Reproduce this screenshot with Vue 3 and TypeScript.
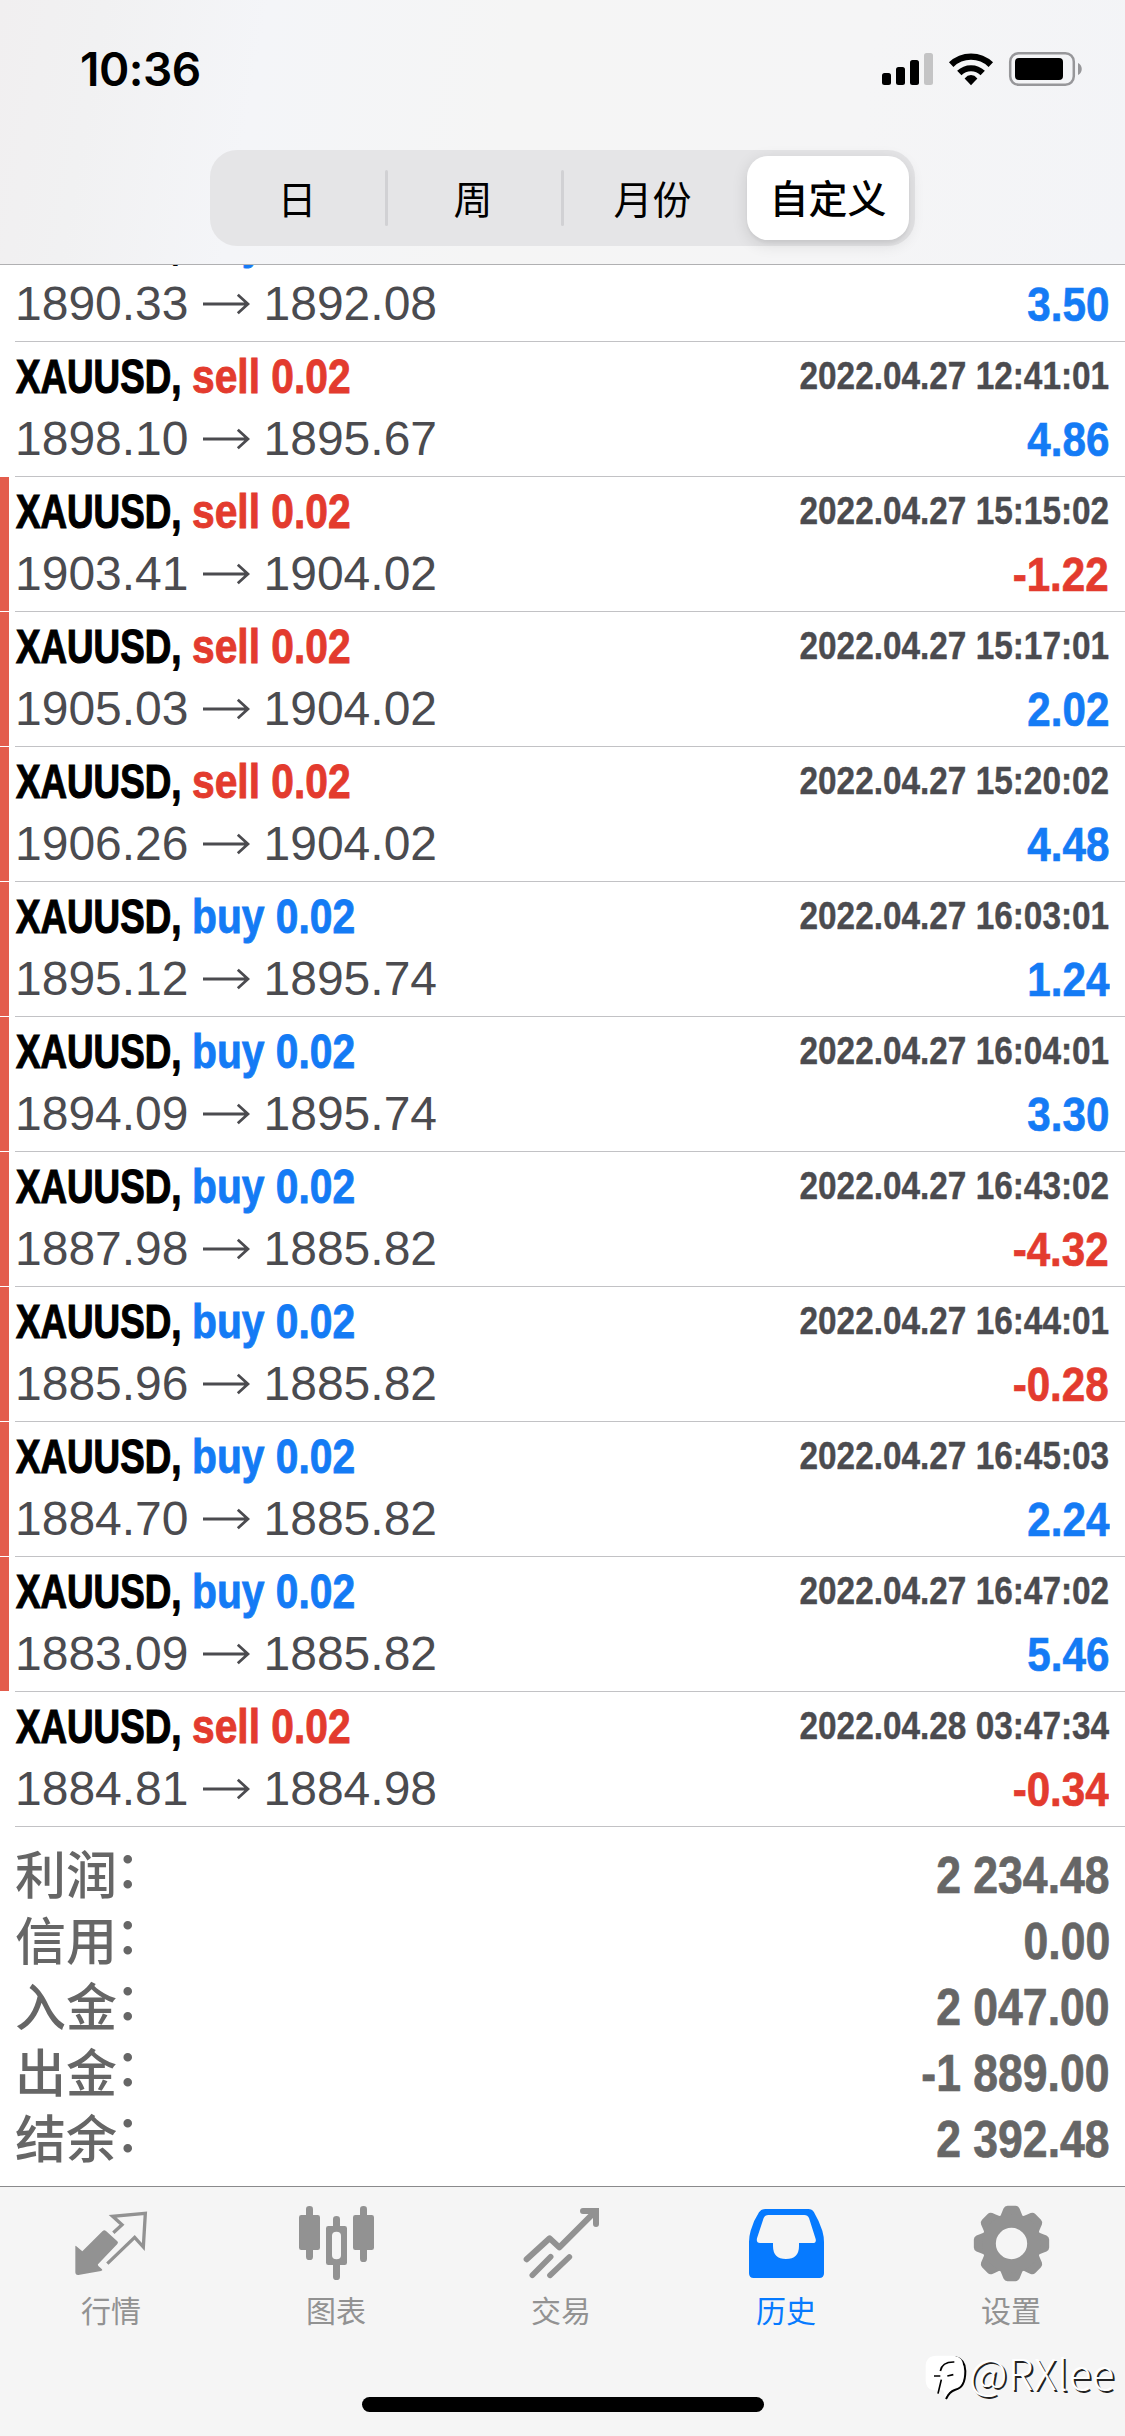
<script setup lang="ts">
interface Deal {
  side: 'buy' | 'sell'
  open: string
  close: string
  time: string
  profit: string
  marked: boolean
}

const deal = (side: 'buy' | 'sell', open: string, close: string, time: string, profit: string, marked = true): Deal => ({
  side, open, close, time, profit, marked,
})

const deals: Deal[] = [
  deal('buy', '1890.33', '1892.08', '2022.04.27 12:40:01', '3.50', false),
  deal('sell', '1898.10', '1895.67', '2022.04.27 12:41:01', '4.86', false),
  deal('sell', '1903.41', '1904.02', '2022.04.27 15:15:02', '-1.22'),
  deal('sell', '1905.03', '1904.02', '2022.04.27 15:17:01', '2.02'),
  deal('sell', '1906.26', '1904.02', '2022.04.27 15:20:02', '4.48'),
  deal('buy', '1895.12', '1895.74', '2022.04.27 16:03:01', '1.24'),
  deal('buy', '1894.09', '1895.74', '2022.04.27 16:04:01', '3.30'),
  deal('buy', '1887.98', '1885.82', '2022.04.27 16:43:02', '-4.32'),
  deal('buy', '1885.96', '1885.82', '2022.04.27 16:44:01', '-0.28'),
  deal('buy', '1884.70', '1885.82', '2022.04.27 16:45:03', '2.24'),
  deal('buy', '1883.09', '1885.82', '2022.04.27 16:47:02', '5.46'),
  deal('sell', '1884.81', '1884.98', '2022.04.28 03:47:34', '-0.34', false),
]

const totals = [
  { label: '利润', value: '2 234.48' },
  { label: '信用', value: '0.00' },
  { label: '入金', value: '2 047.00' },
  { label: '出金', value: '-1 889.00' },
  { label: '结余', value: '2 392.48' },
]

const gearTeeth = [0, 45, 90, 135, 180, 225, 270, 315]
</script>

<template>
  <div class="screen">
    <header class="header">
      <div class="status">
        <span class="clock">10:36</span>
        <svg class="status-icons" width="204" height="36" viewBox="880 51 204 36">
          <rect x="882" y="73" width="9" height="12" rx="2.500" />
          <rect x="896" y="67" width="9" height="18" rx="2.500" />
          <rect x="910" y="60" width="9" height="25" rx="2.500" />
          <rect x="924" y="53" width="9" height="32" rx="2.500" fill="#c4c4c5" />
          <path d="M971 85.300L964.600 78.400Q967.500 75 971 75T977.400 78.400Z" />
          <path d="M959.300 73A16.800 16.800 0 0 1 982.700 73" fill="none" stroke="#000" stroke-width="6.200" />
          <path d="M951.200 64.600A28.500 28.500 0 0 1 990.800 64.600" fill="none" stroke="#000" stroke-width="6.400" />
          <rect x="1010.200" y="53.200" width="63.600" height="31.600" rx="8.500" fill="none" stroke="#97979a" stroke-width="2.500" />
          <rect x="1015" y="58" width="48" height="22" rx="4" />
          <path d="M1078 63C1083 65 1083 73 1078 75Z" fill="#97979a" />
        </svg>
      </div>
      <div class="segments">
        <span class="segment day">日</span>
        <i class="divider" />
        <span class="segment week">周</span>
        <i class="divider" />
        <span class="segment month">月份</span>
        <span class="segment active">自定义</span>
      </div>
    </header>

    <main class="content">
      <div class="deals">
        <section v-for="d in deals" :key="d.time" class="deal" :class="{ marked: d.marked }">
          <div class="deal-body">
            <div class="line">
              <div class="title">
                <span class="symbol">XAUUSD,</span>
                <span class="side" :class="d.side">{{ d.side }} 0.02</span>
              </div>
              <span class="time">{{ d.time }}</span>
            </div>
            <div class="line second">
              <div class="prices">
                <span>{{ d.open }}</span>
                <svg class="arrow" width="47" height="22" viewBox="0 0 47 22">
                  <path d="M0 11H45M34.800 1.800L45 11L34.800 20.200" fill="none" stroke="#4b4b4f" stroke-width="2.800" />
                </svg>
                <span>{{ d.close }}</span>
              </div>
              <span class="profit" :class="d.profit.startsWith('-') ? 'sell' : 'buy'">{{ d.profit }}</span>
            </div>
          </div>
        </section>
      </div>

      <section class="totals">
        <div v-for="t in totals" :key="t.label" class="total">
          <span class="total-label">{{ t.label }}<i class="colon">：</i></span>
          <span class="total-value">{{ t.value }}</span>
        </div>
      </section>
    </main>

    <footer class="tabbar">
      <nav class="tabs">
        <a class="tab">
          <svg width="81" height="78" viewBox="216 105 243 234">
            <path d="M226 229Q226 226 229 229L247 244L308 183Q313 178 318 183L352 214Q356 218 352 222L294 283Q292 285 296 289L306 298Q309 302 303 303L239 314Q226 317 226 306Z" fill="currentColor" />
            <path d="M340 188L366 164L338 139L436 130L430 231L404 202L322 281" fill="none" stroke="currentColor" stroke-width="10" />
          </svg>
          <span>行情</span>
        </a>
        <a class="tab">
          <svg width="81" height="78" viewBox="891 105 243 234" fill="currentColor">
            <rect x="897" y="135" width="63" height="105" rx="7" />
            <rect x="918" y="108" width="21" height="162" rx="10" />
            <rect x="1059" y="135" width="63" height="105" rx="7" />
            <rect x="1080" y="108" width="21" height="168" rx="10" />
            <path d="M999 168V148Q999 138 1009.500 138T1020 148V168H1034Q1041 168 1041 175V278Q1041 285 1034 285H1020V320Q1020 330 1009.500 330T999 320V285H985Q978 285 978 278V175Q978 168 985 168ZM996 197V256Q996 268 1009.500 268T1023 256V197Q1023 185 1009.500 185T996 197Z" fill-rule="evenodd" />
          </svg>
          <span>图表</span>
        </a>
        <a class="tab">
          <svg width="81" height="78" viewBox="216 105 243 234" fill="none" stroke="currentColor" stroke-width="18">
            <path d="M230 268L299 205L328 232L436 124" stroke-linejoin="round" stroke-linecap="round" />
            <path d="M399 123H438V162" stroke-linecap="round" stroke-linejoin="miter" />
            <path d="M247 316L302 260M300 316L358 261" stroke-width="17" stroke-linecap="round" />
          </svg>
          <span>交易</span>
        </a>
        <a class="tab current">
          <svg width="81" height="78" viewBox="891 105 243 234">
            <path d="M946 117H1075Q1086 117 1092 127Q1108 154 1117 182Q1122 200 1122 216V310Q1122 324 1108 324H911Q897 324 897 310V216Q897 199 902 182Q911 151 927 127Q934 117 946 117ZM955 135Q945 135 941 144L921 205Q918 219 930 219H969V228Q969 267 1008 267T1047 228V219H1088Q1100 219 1097 207L1077 144Q1073 135 1063 135Z" fill="currentColor" fill-rule="evenodd" />
          </svg>
          <span>历史</span>
        </a>
        <a class="tab">
          <svg width="81" height="78" viewBox="366 105 243 234">
            <g fill="currentColor" transform="translate(484.500 220.500)">
              <path v-for="a in gearTeeth" :key="a" :transform="`rotate(${a})`" d="M-37 -78Q-31 -85 -28 -95L-24 -105Q-20 -113 -12 -113H12Q20 -113 24 -105L28 -95Q31 -85 37 -78L0 -55Z" />
            </g>
            <circle cx="484.500" cy="220.500" r="67.500" fill="none" stroke="currentColor" stroke-width="41" />
          </svg>
          <span>设置</span>
        </a>
      </nav>
      <div class="home-indicator" />
      <div class="watermark">
        <svg width="44" height="48" viewBox="15 27 132 144">
          <path d="M106 36Q136 44 136 78Q136 128 106 134Q88 139 78 162" fill="none" stroke="#000" stroke-width="6" />
          <path d="M50 32H100Q130 34 130 66V94Q130 126 104 130Q84 138 76 158L70 136H48Q17 136 17 104V64Q17 32 50 32Z" fill="#fff" />
          <path d="M61 78Q66 50 103 51M42 93H61M82 93L100 89M64 104L54 146" fill="none" stroke="#000" stroke-width="5" />
        </svg>
        <span>@RXlee</span>
      </div>
    </footer>
  </div>
</template>

<style>
body {
  margin: 0;
}
</style>

<style scoped>
.screen {
  display: flex;
  flex-direction: column;
  width: 1125px;
  height: 2436px;
  overflow: hidden;
  background: #fff;
  color: #000;
  font-family: "Liberation Sans", "Noto Sans CJK SC", sans-serif;
}

.header {
  box-sizing: border-box;
  flex: none;
  height: 265px;
  border-bottom: 1px solid #b0b0b2;
  background: linear-gradient(100deg, #f1eff0 0%, #f1f1f2 9%, #f4f5f8 23%, #f5f5f5 45%, #f5f5f6 75%, #f3f4f7 100%);
}

.status {
  display: flex;
  justify-content: space-between;
  height: 150px;
  padding: 0 41px 0 80px;
}

.clock {
  margin-top: 41px;
  height: 56px;
  font: 600 46px/56px Inter, sans-serif;
  letter-spacing: -0.5px;
}

.status-icons {
  margin-top: 51px;
}

.segments {
  box-sizing: border-box;
  display: flex;
  align-items: center;
  width: 705px;
  height: 96px;
  margin-left: 210px;
  padding: 6px;
  border-radius: 27px;
  background: #e5e5e7;
}

.segment {
  flex: none;
  padding-bottom: 3px;
  font: 400 39px/80px "Noto Sans CJK SC", sans-serif;
  text-align: center;
}

.segment.day {
  width: 162px;
  margin-right: 7px;
}

.segment.week {
  width: 166px;
  margin: 0 5px 0 2px;
}

.segment.month {
  width: 177px;
  margin-right: 6px;
}

.segment.active {
  box-sizing: border-box;
  width: 162px;
  height: 84px;
  padding: 0;
  border-radius: 21px;
  background: #fff;
  box-shadow: 0 4px 16px rgba(0, 0, 0, 0.12), 0 3px 3px rgba(0, 0, 0, 0.04);
  font-weight: 500;
}

.divider {
  flex: none;
  width: 3px;
  height: 56px;
  border-radius: 2px;
  background: #d1d1d4;
}

.content {
  flex: none;
  height: 1921px;
  overflow: hidden;
}

.deals {
  margin-top: -58px;
}

.deal {
  box-sizing: border-box;
  height: 135px;
  padding-left: 15px;
}

.deal.marked {
  background: linear-gradient(#e35d4d, #e35d4d) 0 0 / 9px 134px no-repeat;
}

.deal-body {
  box-sizing: border-box;
  height: 135px;
  padding: 4px 16px 0 0;
  border-bottom: 1px solid #c2c2c5;
}

.line {
  display: flex;
  justify-content: space-between;
  height: 60px;
  line-height: 60px;
}

.second {
  margin-top: 3px;
}

.title {
  display: flex;
  padding-left: 1px;
  font-size: 49px;
  font-weight: 700;
}

.symbol {
  width: 176px;
  white-space: nowrap;
  transform: scaleX(0.75);
  transform-origin: 0 50%;
  -webkit-text-stroke: 1.2px currentColor;
}

.side {
  white-space: nowrap;
  transform: scaleX(0.832);
  transform-origin: 0 50%;
  -webkit-text-stroke: 0.9px currentColor;
}

.time {
  color: #4b4b4f;
  font-size: 39px;
  font-weight: 700;
  transform: scaleX(0.855);
  transform-origin: 100% 50%;
  -webkit-text-stroke: 0.4px currentColor;
}

.prices {
  display: flex;
  align-items: center;
  color: #4b4b4f;
  font-size: 48px;
}

.arrow {
  margin: 0 14px 0 14px;
}

.profit {
  font-size: 49px;
  font-weight: 700;
  transform: scaleX(0.86);
  transform-origin: 100% 50%;
  -webkit-text-stroke: 0.7px currentColor;
}

.buy {
  color: #147bf5;
}

.sell {
  color: #e33b2e;
}

.totals {
  padding: 14px 15px 0;
  color: #666;
}

.total {
  display: flex;
  justify-content: space-between;
  height: 66px;
}

.total-label {
  font: 500 51px/62px "Noto Sans CJK SC", sans-serif;
}

.colon {
  margin-left: -2px;
  font-style: normal;
  line-height: 0;
  vertical-align: 6px;
}

.total-value {
  font-size: 51px;
  font-weight: 700;
  line-height: 69px;
  transform: scaleX(0.873);
  transform-origin: 100% 50%;
  -webkit-text-stroke: 0.7px currentColor;
}

.tabbar {
  position: relative;
  box-sizing: border-box;
  flex: none;
  height: 250px;
  border-top: 1px solid #8a8a8c;
  background: #f5f5f5;
}

.tabs {
  display: flex;
  padding-top: 18px;
}

.tab {
  display: flex;
  flex-direction: column;
  align-items: center;
  width: 225px;
  color: #929292;
}

.tab span {
  margin: 4px 3px 2px 0;
  font: 400 30px/44px "Noto Sans CJK SC", sans-serif;
}

.tab.current {
  color: #067aff;
}

.home-indicator {
  width: 402px;
  height: 15px;
  margin: 64px auto 0;
  border-radius: 8px;
  background: #000;
}

.watermark {
  position: absolute;
  left: 925px;
  top: 167px;
  display: flex;
  color: #fff;
}

.watermark span {
  margin-top: -8px;
  font: 300 42px/52px "Noto Sans CJK SC", sans-serif;
  letter-spacing: 0.5px;
  text-shadow: 2px 2px 0 #222;
}
</style>
